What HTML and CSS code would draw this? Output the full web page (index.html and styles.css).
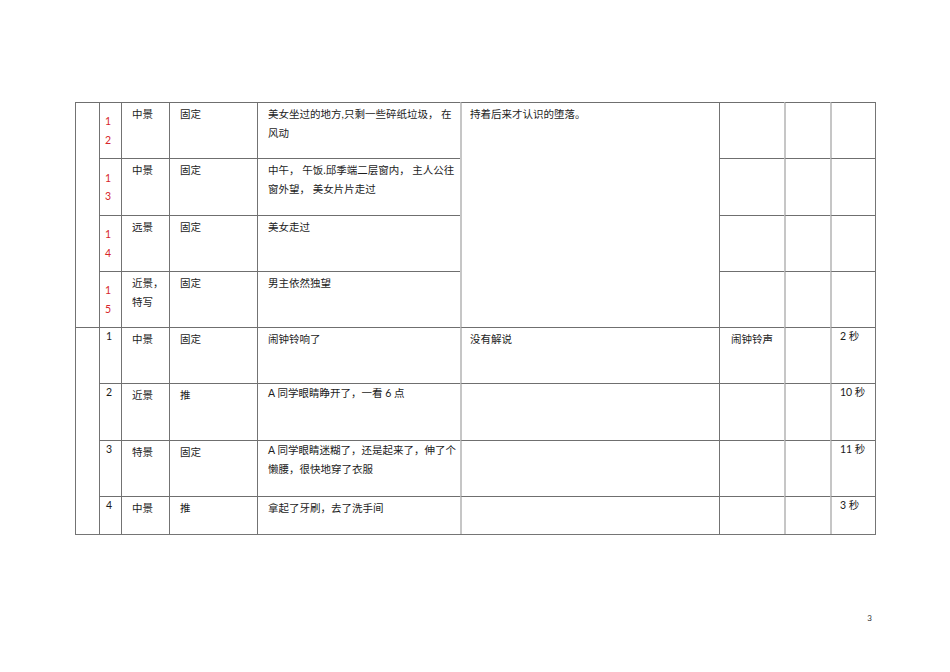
FILE: index.html
```html
<!DOCTYPE html>
<html lang="zh">
<head>
<meta charset="utf-8">
<title>分镜头脚本</title>
<link rel="stylesheet" href="styles.css">
</head>
<body>
<div class="page">
  <table class="shots">
    <colgroup>
      <col class="w-a"><col class="w-b"><col class="w-c"><col class="w-d"><col class="w-e">
      <col class="w-f"><col class="w-g"><col class="w-h"><col class="w-i">
    </colgroup>
    <tbody>
      <tr class="r56">
        <td class="blank" rowspan="4"></td>
        <td class="rnum">1<br>2</td>
        <td class="txt">中景</td>
        <td class="txt">固定</td>
        <td class="txt desc">美女坐过的地方,只剩一些碎纸垃圾， 在风动</td>
        <td class="txt light narr" rowspan="4">持着后来才认识的堕落。</td>
        <td class="txt"></td>
        <td class="txt light"></td>
        <td class="txt light"></td>
      </tr>
      <tr class="r57">
        <td class="rnum">1<br>3</td>
        <td class="txt">中景</td>
        <td class="txt">固定</td>
        <td class="txt desc">中午， 午饭.邱季端二层窗内， 主人公往窗外望， 美女片片走过</td>
        <td class="txt"></td>
        <td class="txt light"></td>
        <td class="txt light"></td>
      </tr>
      <tr class="r56">
        <td class="rnum">1<br>4</td>
        <td class="txt">远景</td>
        <td class="txt">固定</td>
        <td class="txt desc">美女走过</td>
        <td class="txt"></td>
        <td class="txt light"></td>
        <td class="txt light"></td>
      </tr>
      <tr class="r56">
        <td class="rnum">1<br>5</td>
        <td class="txt">近景，<br>特写</td>
        <td class="txt">固定</td>
        <td class="txt desc">男主依然独望</td>
        <td class="txt"></td>
        <td class="txt light"></td>
        <td class="txt light"></td>
      </tr>
      <tr class="r56">
        <td class="blank" rowspan="4"></td>
        <td class="num">1</td>
        <td class="txt">中景</td>
        <td class="txt">固定</td>
        <td class="txt desc">闹钟铃响了</td>
        <td class="txt light narr">没有解说</td>
        <td class="txt sfx">闹钟铃声</td>
        <td class="txt light"></td>
        <td class="num light dur">2 秒</td>
      </tr>
      <tr class="r57">
        <td class="num">2</td>
        <td class="txt">近景</td>
        <td class="txt">推</td>
        <td class="txt desc up">A 同学眼睛睁开了，一看 6 点</td>
        <td class="txt light narr"></td>
        <td class="txt"></td>
        <td class="txt light"></td>
        <td class="num light dur">10 秒</td>
      </tr>
      <tr class="r56">
        <td class="num">3</td>
        <td class="txt">特景</td>
        <td class="txt">固定</td>
        <td class="txt desc up">A 同学眼睛迷糊了，还是起来了，伸了个懒腰，很快地穿了衣服</td>
        <td class="txt light narr"></td>
        <td class="txt"></td>
        <td class="txt light"></td>
        <td class="num light dur">11 秒</td>
      </tr>
      <tr class="r38">
        <td class="num">4</td>
        <td class="txt">中景</td>
        <td class="txt">推</td>
        <td class="txt desc">拿起了牙刷，去了洗手间</td>
        <td class="txt light narr"></td>
        <td class="txt"></td>
        <td class="txt light"></td>
        <td class="num light dur">3 秒</td>
      </tr>
    </tbody>
  </table>
  <div class="pageno">3</div>
</div>
</body>
</html>
```

FILE: styles.css
```css
html, body {
  margin: 0;
  padding: 0;
  background: #ffffff;
}

body {
  font-family: Lato, "Noto Sans CJK SC", sans-serif;
  font-size: 10.5px;
  color: #1c1c1c;
}

.page {
  width: 801px;
  margin-left: 75px;
  padding-top: 102px;
}

.shots {
  table-layout: fixed;
  width: 801px;
  border-collapse: separate;
  border-spacing: 0;
  border-right: 1px solid #757575;
  border-bottom: 1px solid #757575;
}

.w-a { width: 24px; }
.w-b { width: 22px; }
.w-c { width: 48px; }
.w-d { width: 88px; }
.w-e { width: 203px; }
.w-f { width: 259px; }
.w-g { width: 65px; }
.w-h { width: 46px; }
.w-i { width: 45px; }

.r56 { height: 56px; }
.r57 { height: 57px; }
.r38 { height: 38px; }

.shots td {
  border-top: 1px solid #6f6f6f;
  border-left: 1px solid #737373;
  padding: 2px 3px 0 10px;
  line-height: 18.7px;
  vertical-align: top;
  overflow: hidden;
}

.shots td.light {
  border-left: 2px solid #c6c6c6;
  padding-left: 8px;
}

.shots td.blank {
  padding: 0;
}

.shots td.rnum {
  color: #d8262b;
  padding: 0 0 0 5px;
  vertical-align: middle;
  line-height: 18.5px;
}

.shots td.num {
  padding: 1px 0 0 6px;
  line-height: 14px;
}

.shots td.num.dur {
  padding-left: 8px;
}

.shots td.up {
  padding-top: 0;
}

.shots td.sfx {
  text-align: center;
  padding-left: 0;
  padding-right: 0;
}

.pageno {
  margin-top: 77px;
  text-align: right;
  padding-right: 4px;
  font-size: 8px;
  line-height: 12px;
  color: #333333;
}
```
